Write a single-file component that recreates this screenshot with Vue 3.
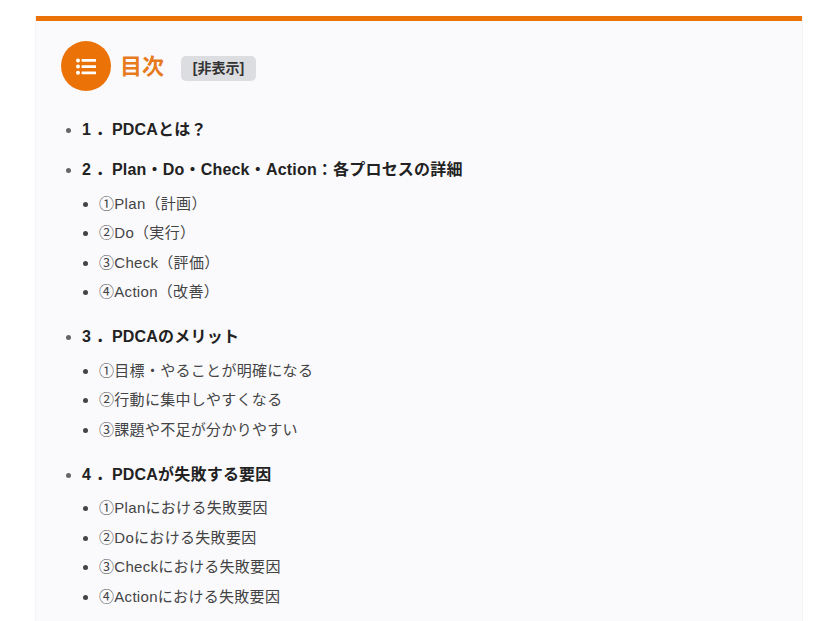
<script setup>
const sections = [
  { title: '1 ．PDCAとは？', items: [] },
  { title: '2 ．Plan・Do・Check・Action：各プロセスの詳細', items: ['①Plan（計画）', '②Do（実行）', '③Check（評価）', '④Action（改善）'] },
  { title: '3 ．PDCAのメリット', items: ['①目標・やることが明確になる', '②行動に集中しやすくなる', '③課題や不足が分かりやすい'] },
  { title: '4 ．PDCAが失敗する要因', items: ['①Planにおける失敗要因', '②Doにおける失敗要因', '③Checkにおける失敗要因', '④Actionにおける失敗要因'] },
]
</script>

<template>
  <div class="page">
    <div class="toc">
      <div class="head">
        <span class="badge">
          <svg width="20" height="17" viewBox="0 0 20 17" fill="#fff">
            <circle cx="2" cy="2.4" r="2" />
            <circle cx="2" cy="8.6" r="2" />
            <circle cx="2" cy="14.7" r="2" />
            <rect x="5.6" y="1" width="14.4" height="2.8" rx="0.5" />
            <rect x="5.6" y="7.2" width="14.4" height="2.8" rx="0.5" />
            <rect x="5.6" y="13.4" width="14.4" height="2.8" rx="0.5" />
          </svg>
        </span>
        <span class="title">目次</span>
        <span class="toggle">[非表示]</span>
      </div>
      <ul class="list">
        <li v-for="s in sections" :key="s.title" class="sec">
          <span class="sec-title">{{ s.title }}</span>
          <ul v-if="s.items.length" class="sub">
            <li v-for="i in s.items" :key="i">{{ i }}</li>
          </ul>
        </li>
      </ul>
    </div>
  </div>
</template>

<style>
html, body { margin: 0; background: #fff; overflow: hidden; }
</style>

<style scoped>
.page {
  height: 621px;
  overflow: hidden;
  padding: 16px 36px 0;
  box-sizing: content-box;
  width: 766px;
  font-family: "Liberation Sans", "Noto Sans CJK JP", sans-serif;
}
.toc {
  background: #fafafd;
  border-top: 5px solid #ea7206;
  box-shadow: 1px 0 0 #f4f4f6, -1px 0 0 #f4f4f6;
  padding: 20px 25px 20px;
  box-sizing: border-box;
  min-height: 620px;
}
.head { display: flex; align-items: flex-start; height: 50px; }
.badge {
  width: 50px;
  height: 50px;
  border-radius: 50%;
  background: #ea7206;
  display: flex;
  align-items: center;
  justify-content: center;
}
.title {
  margin-left: 9px;
  font-size: 22px;
  font-weight: 700;
  color: #e87a1e;
  line-height: 52px;
}
.toggle {
  margin-left: 17px;
  margin-top: 15px;
  background: #dcdde0;
  border-radius: 5px;
  font-size: 14px;
  font-weight: 700;
  color: #333;
  width: 75px;
  height: 25px;
  line-height: 25px;
  text-align: center;
}
.list { margin: 27px 0 0; padding: 0 0 0 21px; list-style: disc; color: #666; }
.sec { margin-bottom: 16px; line-height: 24px; }
.sec-title {
  font-size: 16px;
  font-weight: 700;
  color: #222;
  letter-spacing: 0.2px;
}
.sub { margin: 9.8px 0 0; padding: 0 0 5px 17px; list-style: disc; }
.sub li {
  font-size: 15px;
  line-height: 24px;
  margin-bottom: 5.4px;
  color: #444;
  letter-spacing: 0.3px;
}
.sub li:last-child { margin-bottom: 0; }
</style>
